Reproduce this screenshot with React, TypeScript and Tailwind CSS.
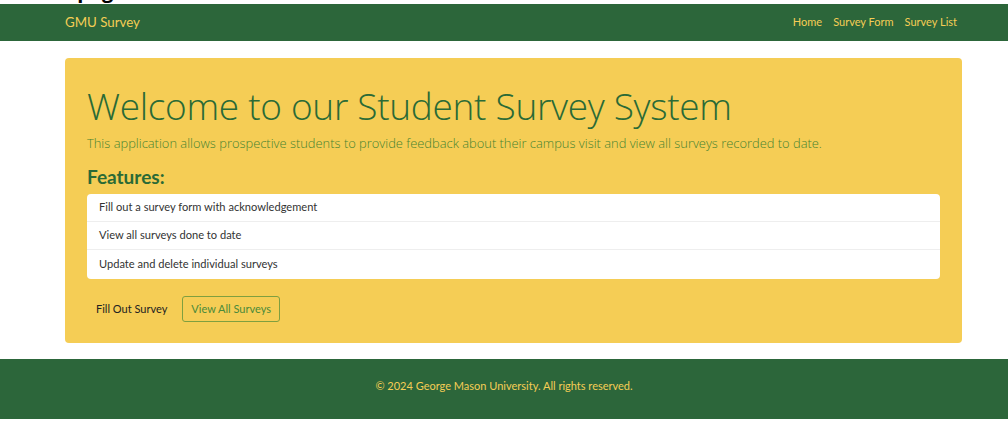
import React from "react";

export default function App() {
  const lato = { fontFamily: 'Lato, "Open Sans", sans-serif' };
  const open = { fontFamily: '"Open Sans", "Noto Sans", sans-serif' };
  return (
    <div className="w-[1008px] h-[427px] bg-white overflow-hidden" style={lato}>
      <div className="h-[4px] overflow-hidden relative">
        <div className="absolute left-[13px] top-[-21px] text-[20px] font-bold leading-[24px] text-black" style={open}>Home page</div>
      </div>
      <nav className="h-[37px] bg-[#2c663a] flex items-center">
        <div className="ml-[65px] w-[897px] flex items-center justify-between">
          <span className="text-[13.3px] text-[#f5cd55]">GMU Survey</span>
          <div className="flex gap-[11px] text-[11px] text-[#f5cd55] mr-[5px]">
            <span>Home</span>
            <span>Survey Form</span>
            <span>Survey List</span>
          </div>
        </div>
      </nav>
      <div className="ml-[65px] w-[897px] mt-[17px] h-[285px] bg-[#f5cd55] rounded-[4px] px-[22px] pt-[22px]">
        <h1 className="text-[37px] font-light leading-[52px] text-[#2a6a36] tracking-[-0.3px]" style={open}>
          Welcome to our Student Survey System
        </h1>
        <p className="text-[12.9px] font-light leading-[20px] text-[#478430] mt-[1px]" style={open}>
          This application allows prospective students to provide feedback about their campus visit and view all surveys recorded to date.
        </p>
        <h3 className="text-[19px] font-bold leading-[26px] text-[#2a6a36] mt-[11px]">Features:</h3>
        <ul className="mt-[4px] bg-white rounded-[4px] w-[853px] text-[11.1px] text-[#333]">
          <li className="h-[28px] flex items-center px-[12px] border-b border-[#eee]">Fill out a survey form with acknowledgement</li>
          <li className="h-[28px] flex items-center px-[12px] border-b border-[#eee]">View all surveys done to date</li>
          <li className="h-[29px] flex items-center px-[12px]">Update and delete individual surveys</li>
        </ul>
        <div className="mt-[17px] flex items-center">
          <span className="ml-[9px] text-[11px] text-[#222]">Fill Out Survey</span>
          <span className="ml-[15px] h-[26px] px-[8px] flex items-center border border-[#7f9f3f] rounded-[3px] text-[11px] text-[#4a8a3a]">
            View All Surveys
          </span>
        </div>
      </div>
      <footer className="mt-[16px] h-[60px] bg-[#2c663a] flex items-center justify-center pb-[6px]">
        <span className="text-[11px] text-[#f5cd55]">© 2024 George Mason University. All rights reserved.</span>
      </footer>
    </div>
  );
}
